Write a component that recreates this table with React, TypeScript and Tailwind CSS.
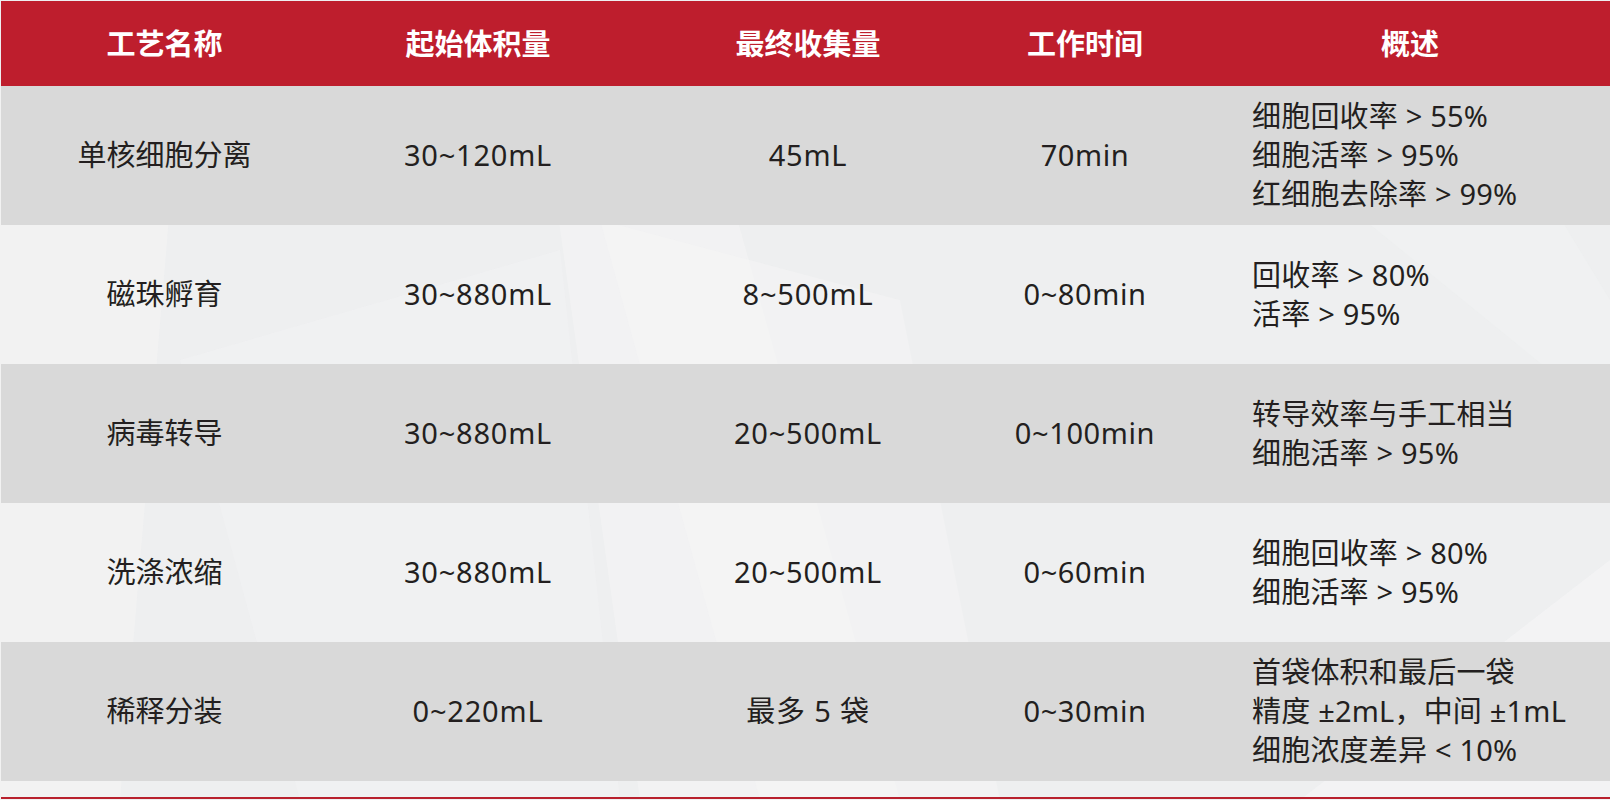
const font = { fontFamily: '"Noto Sans", "Noto Sans CJK SC", sans-serif' }

type Row = {
  name: string
  start: string
  end: string
  time: string
  desc: string[]
  shade: boolean
}

const rows: Row[] = [
  {
    name: '单核细胞分离',
    start: '30~120mL',
    end: '45mL',
    time: '70min',
    desc: ['细胞回收率 > 55%', '细胞活率 > 95%', '红细胞去除率 > 99%'],
    shade: true,
  },
  {
    name: '磁珠孵育',
    start: '30~880mL',
    end: '8~500mL',
    time: '0~80min',
    desc: ['回收率 > 80%', '活率 > 95%'],
    shade: false,
  },
  {
    name: '病毒转导',
    start: '30~880mL',
    end: '20~500mL',
    time: '0~100min',
    desc: ['转导效率与手工相当', '细胞活率 > 95%'],
    shade: true,
  },
  {
    name: '洗涤浓缩',
    start: '30~880mL',
    end: '20~500mL',
    time: '0~60min',
    desc: ['细胞回收率 > 80%', '细胞活率 > 95%'],
    shade: false,
  },
  {
    name: '稀释分装',
    start: '0~220mL',
    end: '最多 5 袋',
    time: '0~30min',
    desc: ['首袋体积和最后一袋', '精度 ±2mL，中间 ±1mL', '细胞浓度差异 < 10%'],
    shade: true,
  },
]

function Backdrop() {
  return (
    <svg className="absolute inset-0 h-full w-full" viewBox="0 0 1610 800" preserveAspectRatio="none">
      <rect width="1610" height="800" fill="#eeeff0" />
      <polygon points="0,86 180,86 120,800 0,800" fill="#f3f3f3" opacity="0.8" />
      <polygon points="540,86 700,86 900,800 640,800" fill="#f4f4f4" opacity="0.7" />
      <polygon points="600,220 900,300 1000,800 760,800" fill="#f6f6f6" opacity="0.5" />
      <polygon points="180,360 560,250 620,800 300,800" fill="#f2f2f3" opacity="0.6" />
      <polygon points="1300,800 1610,560 1610,800" fill="#f4f4f5" opacity="0.8" />
      <polygon points="1200,86 1480,86 1610,300 1610,420" fill="#f2f3f3" opacity="0.5" />
    </svg>
  )
}

export default function App() {
  return (
    <div className="relative h-[800px] w-[1610px] overflow-hidden bg-white" style={font}>
      <Backdrop />
      <div className="relative flex h-full flex-col pl-[1px] pt-[1px]">
        <div className="flex h-[85px] items-center bg-[#be1e2d] text-[29px] font-bold text-white">
          <div className="w-[327px] text-center">工艺名称</div>
          <div className="w-[300px] text-center">起始体积量</div>
          <div className="w-[360px] text-center">最终收集量</div>
          <div className="w-[194px] text-center">工作时间</div>
          <div className="flex-1 pl-[28px] text-center">概述</div>
        </div>
        {rows.map((r) => (
          <div
            key={r.name}
            className={`flex h-[139px] items-center pb-[2px] text-[29px] text-[#231f20] ${r.shade ? 'bg-[#d9d9d9]' : ''}`}
          >
            <div className="w-[327px] text-center">{r.name}</div>
            <div className="w-[300px] text-center tracking-[0.8px]">{r.start}</div>
            <div className="w-[360px] text-center tracking-[0.8px]">{r.end}</div>
            <div className="w-[194px] text-center tracking-[0.6px]">{r.time}</div>
            <div className="flex-1 pl-[70px] leading-[39px] tracking-[0.2px]">
              {r.desc.map((d) => (
                <div key={d}>{d}</div>
              ))}
            </div>
          </div>
        ))}
        <div className="flex-1" />
        <div className="mb-[1px] h-[2px] bg-[#b8202d]" />
      </div>
    </div>
  )
}
